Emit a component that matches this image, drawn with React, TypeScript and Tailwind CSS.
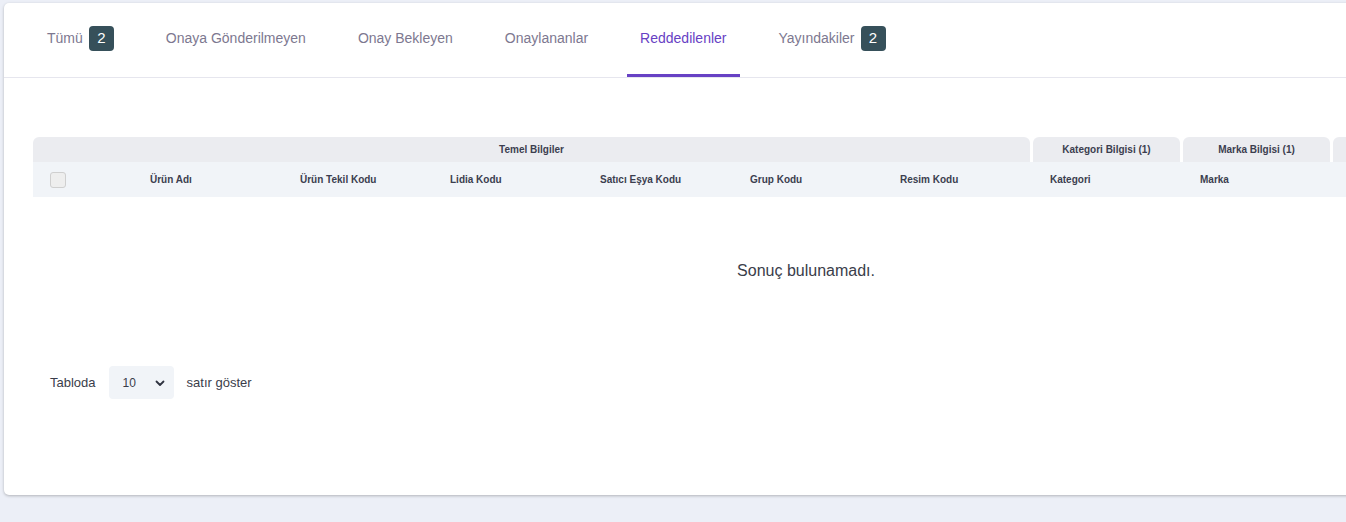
import React from "react";

const tabs: { label: string; badge?: string; active?: boolean }[] = [
  { label: "Tümü", badge: "2" },
  { label: "Onaya Gönderilmeyen" },
  { label: "Onay Bekleyen" },
  { label: "Onaylananlar" },
  { label: "Reddedilenler", active: true },
  { label: "Yayındakiler", badge: "2" },
];

const cols = ["Ürün Adı", "Ürün Tekil Kodu", "Lidia Kodu", "Satıcı Eşya Kodu", "Grup Kodu", "Resim Kodu", "Kategori", "Marka", "", ""];

export default function App() {
  return (
    <div
      className="h-[522px] w-full overflow-hidden bg-[#eceff7] pl-[4px] pt-[3px]"
      style={{ fontFamily: '"Liberation Sans", Arial, sans-serif' }}
    >
      <div className="w-[1700px] rounded-l-[5px] bg-white shadow-[0_1px_3px_rgba(0,0,0,0.25)]">
        {/* Tabs */}
        <div className="flex h-[75px] items-stretch gap-[26px] border-b border-[#e6e6ee] pl-[30px]">
          {tabs.map((t) => (
            <div
              key={t.label}
              className={
                "flex items-center gap-[6px] border-b-[3px] px-[13px] text-[14px] " +
                (t.active ? "border-[#6741c4] text-[#6741c4]" : "border-transparent text-[#7d7890]")
              }
            >
              <span>{t.label}</span>
              {t.badge && (
                <span className="flex h-[25px] w-[25px] items-center justify-center rounded-[4px] bg-[#36505a] text-[15px] text-white">
                  {t.badge}
                </span>
              )}
            </div>
          ))}
        </div>

        {/* Table */}
        <div className="pl-[29px] pt-[59px]">
          <div className="w-[1546px]">
            <div className="flex h-[25px] text-[10px] font-bold text-[#3b3e4f]">
              <div className="flex w-[997px] shrink-0 items-center justify-center rounded-t-[6px] bg-[#ebecf0]">Temel Bilgiler</div>
              <div className="ml-[3px] flex w-[147px] shrink-0 items-center justify-center rounded-t-[6px] bg-[#ebecf0]">Kategori Bilgisi (1)</div>
              <div className="ml-[3px] flex w-[147px] shrink-0 items-center justify-center rounded-t-[6px] bg-[#ebecf0]">Marka Bilgisi (1)</div>
              <div className="ml-[3px] flex w-[246px] shrink-0 items-center justify-center rounded-t-[6px] bg-[#ebecf0]"></div>
            </div>
            <div className="flex h-[35px] items-center overflow-hidden bg-[#f1f4f8] text-[10px] font-bold text-[#3b3e4f]">
              <div className="flex w-[100px] shrink-0 items-center pl-[17px]">
                <div className="h-[16px] w-[16px] rounded-[3px] border border-[#cfcfcf] bg-[#eeeeee]"></div>
              </div>
              {cols.map((c, i) => (
                <div key={i} className="w-[150px] shrink-0 pl-[17px]">
                  {c}
                </div>
              ))}
            </div>
            <div className="flex h-[148px] items-center justify-center text-[16px] text-[#3a3d4a]">
              Sonuç bulunamadı.
            </div>
          </div>

          {/* Footer */}
          <div className="flex items-center pb-[96px] pl-[17px] pt-[21px] text-[13px] text-[#3a3d4a]">
            <span>Tabloda</span>
            <div className="ml-[13px] flex h-[33px] w-[65px] items-center justify-between rounded-[4px] bg-[#f1f4f8] pl-[14px] pr-[9px] text-[12px] text-[#3a3d4a]">
              <span>10</span>
              <svg width="10" height="10" viewBox="0 0 10 10">
                <path d="M1.5 3.5 L5 7 L8.5 3.5" fill="none" stroke="#2f3340" strokeWidth="1.8" strokeLinecap="round" strokeLinejoin="round" />
              </svg>
            </div>
            <span className="ml-[13px]">satır göster</span>
          </div>
        </div>
      </div>
    </div>
  );
}
